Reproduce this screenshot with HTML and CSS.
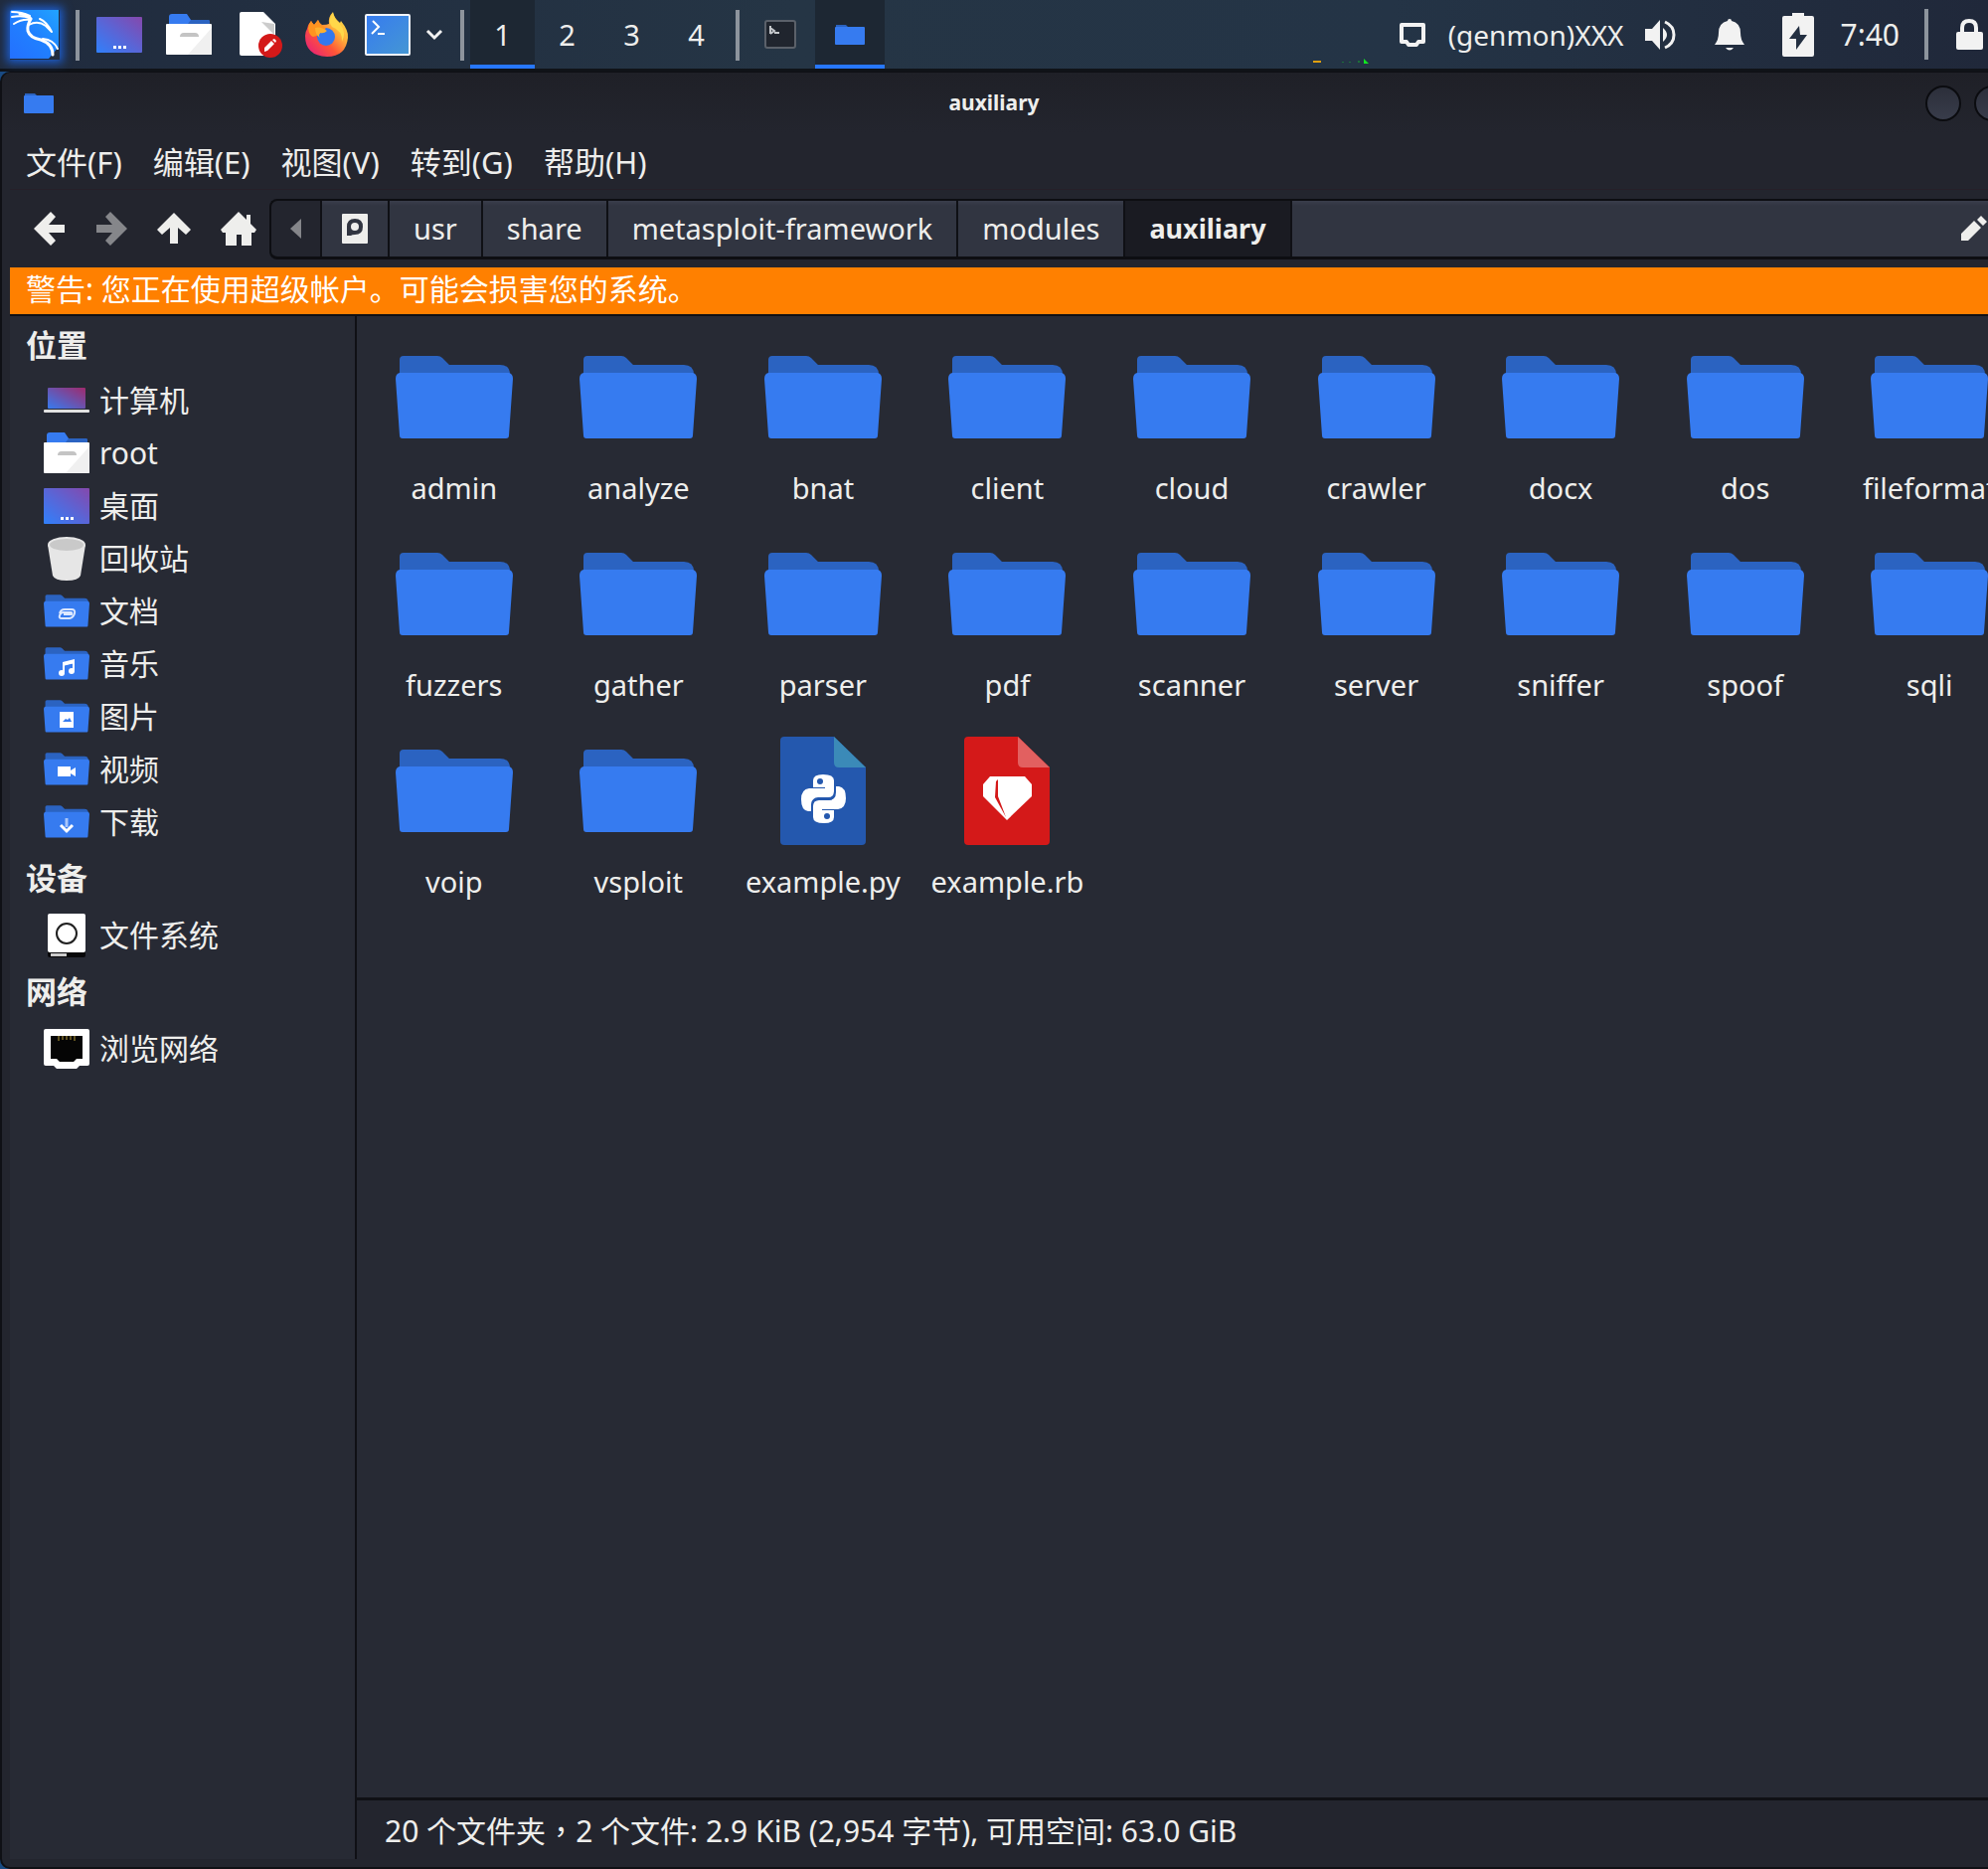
FILE: index.html
```
<!DOCTYPE html>
<html lang="zh-CN">
<head>
<meta charset="utf-8">
<title>auxiliary</title>
<link rel="stylesheet" href="styles.css">
</head>
<body>
<svg class="defs" aria-hidden="true">
  <defs>
    <linearGradient id="g-kali" x1="0" y1="1" x2="1" y2="0"><stop offset="0" stop-color="#2470ff"/><stop offset=".5" stop-color="#2080ff"/><stop offset="1" stop-color="#22a4ff"/></linearGradient>
    <linearGradient id="g-desk" x1="0" y1="1" x2="1" y2="0"><stop offset="0" stop-color="#3080fb"/><stop offset=".5" stop-color="#5a65d6"/><stop offset="1" stop-color="#8548ac"/></linearGradient>
    <linearGradient id="g-laptop" x1="0" y1="1" x2="1" y2="0"><stop offset="0" stop-color="#367bf0"/><stop offset="1" stop-color="#a02a6c"/></linearGradient>
    <linearGradient id="g-term" x1="0" y1="0" x2="1" y2="1"><stop offset="0" stop-color="#367bf0"/><stop offset="1" stop-color="#4597d3"/></linearGradient>
    <linearGradient id="g-fox" x1="1" y1="0" x2="0" y2="1"><stop offset="0" stop-color="#fff44f"/><stop offset=".35" stop-color="#ffb03a"/><stop offset=".6" stop-color="#ff5537"/><stop offset="1" stop-color="#e31587"/></linearGradient>
  </defs>
  <symbol id="folder" viewBox="0 0 118 84"><path fill="#2b63c1" d="M4 26V4q0-4 4-4h34q3 0 5 2l7 7h51q10 0 10 10v8z"/><path fill="#367bf0" d="M4 17h110q4 1 4 6l-4 57q0 3-3 3H7q-3 0-3-3L0 23q0-5 4-6z"/></symbol>
  <symbol id="home-folder" viewBox="0 0 46 42"><path fill="#367bf0" d="M3 12V3q0-3 3-3h15l4 6h17q2 0 2 2v5H3z"/><path fill="#2b63c1" d="M22 10l3-4h17q2 0 2 2v3H22z"/><path fill="#fff" d="M1 10h44q1 0 1 1v29q0 1-1 1H1q-1 0-1-1V11q0-1 1-1z"/><path fill="#f0f0f0" d="M46 14v26q0 1-1 1H22z"/><path fill="#c4c4c4" d="M14 23q0-4 4-4h11q4 0 4 4z"/></symbol>
  <symbol id="desktop" viewBox="0 0 46 36"><rect width="46" height="36" rx="1" fill="url(#g-desk)"/><path fill="#fff" d="M17 29h3v3h-3zm5 0h3v3h-3zm5 0h3v3h-3z"/></symbol>
</svg>

<header class="panel">
  <button class="launch kali" aria-label="Kali"><svg width="50" height="50" viewBox="0 0 50 50"><path fill="url(#g-kali)" d="M1 0h48v37L39 49H0V1z"/><g fill="none" stroke="#fff" stroke-linecap="round"><path stroke-width="2" d="M2 2q10 0 18 4M2 7q10-2 18 1M4 14q8-5 16-4"/><path stroke-width="3" d="M10 4q8 1 11 5-4 7-3 12 2 7 13 9 12 4 12 15"/><path stroke-width="2" d="M33 29q11 1 15 10"/><path stroke-width="2" d="M19 15q9-5 17 1l6 6M30 9q7 3 12 13"/></g></svg></button>
  <span class="sep"></span>
  <nav class="launchers">
    <button class="launch show-desktop" aria-label="桌面"><svg width="46" height="36"><use href="#desktop"/></svg></button>
    <button class="launch files-app" aria-label="主目录"><svg width="46" height="42"><use href="#home-folder"/></svg></button>
    <button class="launch editor" aria-label="编辑器"><svg width="44" height="46" viewBox="0 0 44 46"><path fill="#fff" d="M2 0h22l12 12v32H2q-2 0-2-2V2q0-2 2-2z"/><path fill="#ccc" d="M22 10l13 2v11z"/><circle cx="31" cy="34" r="12" fill="#d41919"/><path fill="#fff" d="M25 40v-4l7-7 3 3-7 7zM33 28l2-1 2 2-1 2z"/></svg></button>
    <button class="launch browser" aria-label="Firefox"><svg width="44" height="46" viewBox="0 0 44 46"><path fill="url(#g-fox)" d="M2 17Q3 12 6 9q1 2 3 4l4-5q1 3 4 5 5 0 7-1-1-7 4-12 1 6 7 11l1-2q8 10 7 17-2 19-21 19Q0 44 0 24q0-4 2-7z"/><circle cx="21" cy="25" r="9" fill="#3378ef"/><path fill="#ff9420" d="M6 9q1 2 3 4l4-5q1 4 5 6l3 3-5 3q-2 4-8 5-4-1-5-9 1-5 3-7z"/><path fill="#ffb02e" d="M10 16q5-2 12 3-3 3-7 2-2 3 0 5-5-3-5-10z"/><path fill="#ffd84a" d="M28 1q1 6 7 11 7 8 2 18 1-11-10-15-5-6 1-14z"/></svg></button>
    <button class="launch terminal" aria-label="终端"><svg width="46" height="42" viewBox="0 0 46 42"><rect x="1" y="1" width="44" height="40" rx="1" fill="url(#g-term)" stroke="#f2f5fa" stroke-width="2"/><path fill="none" stroke="#fff" stroke-width="2" d="M8 7l6 6-7 7M13 20h7"/></svg></button>
    <button class="launch chevron" aria-label="更多"><svg width="18" height="12" viewBox="0 0 18 12"><path fill="none" stroke="#f2f2f2" stroke-width="3" d="M2 2l7 7 7-7"/></svg></button>
  </nav>
  <span class="sep"></span>
  <nav class="workspaces">
    <button class="ws current">1</button><button class="ws">2</button><button class="ws">3</button><button class="ws">4</button>
  </nav>
  <span class="sep"></span>
  <nav class="tasks">
    <button class="task" aria-label="终端窗口"><svg width="32" height="30" viewBox="0 0 32 30"><rect x="1" y="1" width="30" height="27" rx="2" fill="#20252e" stroke="#5b616a" stroke-width="2"/><path fill="none" stroke="#c5c8cc" stroke-width="2" d="M6 6v8M6 8l4 3-4 3M10 13h5"/></svg></button>
    <button class="task current" aria-label="auxiliary"><svg width="30" height="22" viewBox="0 0 30 22"><path fill="#2b63c1" d="M1 8V1h10l2 2h15v5z"/><rect y="3" width="30" height="18" rx="1" fill="#367bf0"/></svg></button>
  </nav>
  <div class="tray">
    <svg class="graph" width="56" height="6" viewBox="0 0 56 6"><path fill="#e0a010" d="M0 2h8v2H0z"/><path fill="#1c7038" d="M29 3h2v1h-2zm7 0h2v1h-2zm9-1h2v2h-2z"/><path fill="#10e820" d="M51 0l5 5h-5z"/></svg>
    <svg class="chip" width="28" height="24" viewBox="0 0 28 24"><path fill="none" stroke="#f2f2f2" stroke-width="4" stroke-linejoin="round" d="M3 2h22v17h-5l-2 3h-8l-2-3H3z"/></svg>
    <span class="genmon">(genmon)XXX</span>
    <svg class="speaker" width="32" height="30" viewBox="0 0 32 30"><path fill="#f2f2f2" d="M0 9h7l8-9v30l-8-9H0zM18 8q8 7 0 14z"/><path fill="none" stroke="#f2f2f2" stroke-width="3" d="M20 2q9 4 9 13t-9 13"/></svg>
    <svg class="bell" width="30" height="32" viewBox="0 0 30 32"><path fill="#f2f2f2" d="M13 2q0-2 2-2t2 2q9 2 9 12 0 7 4 12H0q4-5 4-12Q4 4 13 2zM11 29h8q-4 5-8 0z"/></svg>
    <svg class="battery" width="32" height="44" viewBox="0 0 32 44"><path fill="#f2f2f2" d="M10 0h12v3h8q2 0 2 2v37q0 2-2 2H2q-2 0-2-2V5q0-2 2-2h8z"/><path fill="#232f41" d="M17 13L7 26h7v11l11-15h-7z"/></svg>
    <time class="clock">7:40</time>
    <span class="sep"></span>
    <svg class="lock" width="27" height="31" viewBox="0 0 27 31"><path fill="none" stroke="#f2f2f2" stroke-width="4" d="M6 14V9q0-7 7-7t7 7v5"/><rect y="13" width="27" height="18" rx="2" fill="#f2f2f2"/></svg>
  </div>
</header>

<main class="window">
  <div class="titlebar">
    <svg class="title-icon" width="30" height="22" viewBox="0 0 30 22"><path fill="#2b63c1" d="M1 8V1h10l2 2h15v5z"/><rect y="3" width="30" height="18" rx="1" fill="#367bf0"/></svg>
    <h1>auxiliary</h1>
    <div class="controls"><button class="ctl" aria-label="最小化"></button><button class="ctl" aria-label="最大化"></button></div>
  </div>
  <nav class="menubar"><button>文件(F)</button><button>编辑(E)</button><button>视图(V)</button><button>转到(G)</button><button>帮助(H)</button></nav>
  <div class="toolbar">
    <div class="nav-buttons">
      <button aria-label="后退"><svg width="32" height="34" viewBox="0 0 32 34"><path fill="#eeeeec" d="M17 0l5 5-7 8h16v8H15l7 8-5 5L0 17z"/></svg></button>
      <button aria-label="前进" disabled><svg width="32" height="34" viewBox="0 0 32 34"><path fill="#85868a" d="M15 0l-5 5 7 8H1v8h16l-7 8 5 5 17-17z"/></svg></button>
      <button aria-label="向上"><svg width="34" height="32" viewBox="0 0 34 32"><path fill="#eeeeec" d="M17 0l17 17-5 5-8-7v16h-8V15l-8 7-5-5z"/></svg></button>
      <button aria-label="主目录"><svg width="36" height="34" viewBox="0 0 36 34"><path fill="#eeeeec" d="M18 0l8 8V3h4v9l6 6-2 3h-3v13H21V23h-5v11H5V21H2l-2-3z"/></svg></button>
    </div>
    <div class="pathbar">
      <button class="crumb scroll" aria-label="向左"><svg width="11" height="20" viewBox="0 0 11 20"><path fill="#85868a" d="M11 0v20L0 10z"/></svg></button>
      <button class="crumb disk" aria-label="文件系统"><svg width="26" height="30" viewBox="0 0 26 30"><rect width="26" height="30" rx="1" fill="#eeeeec"/><path fill="#313541" d="M5 22V13q0-8 8-8t8 8-8 8q-3 0-4 1z"/><circle cx="13" cy="13" r="4" fill="#eeeeec"/></svg></button>
      <button class="crumb">usr</button><button class="crumb">share</button><button class="crumb">metasploit-framework</button><button class="crumb">modules</button><button class="crumb active">auxiliary</button>
      <button class="crumb edit" aria-label="编辑路径"><svg width="26" height="26" viewBox="0 0 26 26"><path fill="#eeeeec" d="M0 18L13 5l7 7L7 25H0zM16 4l4-4 6 6-4 4z"/></svg></button>
    </div>
  </div>
  <p class="warning">警告: 您正在使用超级帐户。可能会损害您的系统。</p>
  <div class="panes">
    <aside class="sidebar">
      <h2>位置</h2>
      <a href="#"><svg width="46" height="26" viewBox="0 0 46 26"><rect x="4" y="0" width="38" height="21" rx="1" fill="url(#g-laptop)"/><rect y="22" width="46" height="3" rx="1" fill="#e2e2e2"/></svg>计算机</a>
      <a href="#"><svg width="46" height="42"><use href="#home-folder"/></svg>root</a>
      <a href="#"><svg width="46" height="36"><use href="#desktop"/></svg>桌面</a>
      <a href="#"><svg width="46" height="46" viewBox="0 0 46 46"><path fill="#e6e6e6" d="M4 9l5 31q2 5 14 5t14-5l5-31z"/><ellipse cx="23" cy="9" rx="19" ry="8" fill="#e6e6e6"/><ellipse cx="23" cy="9" rx="17" ry="6" fill="#c9c9c9"/></svg>回收站</a>
      <a href="#"><svg width="46" height="34" viewBox="0 0 46 34"><use href="#folder" width="46" height="33"/><path fill="none" stroke="#dce8ff" stroke-width="2" d="M16 19q1-4 5-4h7q4 0 3 4t-5 5h-8q-3 0-2-3t4-3h7q2 0 1 2h-8"/></svg>文档</a>
      <a href="#"><svg width="46" height="34" viewBox="0 0 46 34"><use href="#folder" width="46" height="33"/><path fill="none" stroke="#fff" stroke-width="2" d="M20 25v-8l10-2v9"/><path fill="#fff" d="M19 15l12-3v4l-12 3z"/><circle cx="18" cy="26" r="3" fill="#fff"/><circle cx="28" cy="24" r="3" fill="#fff"/></svg>音乐</a>
      <a href="#"><svg width="46" height="34" viewBox="0 0 46 34"><use href="#folder" width="46" height="33"/><rect x="16" y="12" width="14" height="16" fill="#fff"/><path fill="#367bf0" d="M19 22l3-3 2 1 2-2 2 4z"/></svg>图片</a>
      <a href="#"><svg width="46" height="34" viewBox="0 0 46 34"><use href="#folder" width="46" height="33"/><path fill="#fff" d="M14 14h13v4l5-3v9l-5-3v3H14z"/></svg>视频</a>
      <a href="#"><svg width="46" height="34" viewBox="0 0 46 34"><use href="#folder" width="46" height="33"/><path fill="none" stroke="#a9c6fb" stroke-width="3" d="M23 13v9"/><path fill="none" stroke="#fff" stroke-width="3" d="M17 20l6 6 6-6"/></svg>下载</a>
      <h2>设备</h2>
      <a href="#"><svg width="46" height="46" viewBox="0 0 46 46"><rect x="4" y="30" width="38" height="15" rx="2" fill="#08080a"/><rect x="4" y="1" width="38" height="39" rx="2" fill="#fff"/><path fill="#ccc" d="M7 41h16v3H7z"/><circle cx="23" cy="21" r="10" fill="none" stroke="#202020" stroke-width="2"/></svg>文件系统</a>
      <h2>网络</h2>
      <a href="#"><svg width="46" height="40" viewBox="0 0 46 40"><path fill="#fff" d="M2 0h42q2 0 2 2v33q0 2-2 2h-8l-3 3H13l-3-3H2q-2 0-2-2V2q0-2 2-2z"/><path fill="#050505" d="M7 7h32v23h-6l-3 3H16l-3-3H7z"/><path stroke="#b59a38" stroke-width="1" d="M15 7v5M19 7v4M23 7v4M27 7v4M31 7v5"/></svg>浏览网络</a>
    </aside>
    <section class="content">
      <ul class="files">
        <li><a href="#"><svg><use href="#folder"/></svg>admin</a></li>
        <li><a href="#"><svg><use href="#folder"/></svg>analyze</a></li>
        <li><a href="#"><svg><use href="#folder"/></svg>bnat</a></li>
        <li><a href="#"><svg><use href="#folder"/></svg>client</a></li>
        <li><a href="#"><svg><use href="#folder"/></svg>cloud</a></li>
        <li><a href="#"><svg><use href="#folder"/></svg>crawler</a></li>
        <li><a href="#"><svg><use href="#folder"/></svg>docx</a></li>
        <li><a href="#"><svg><use href="#folder"/></svg>dos</a></li>
        <li><a href="#"><svg><use href="#folder"/></svg>fileformat</a></li>
        <li><a href="#"><svg><use href="#folder"/></svg>fuzzers</a></li>
        <li><a href="#"><svg><use href="#folder"/></svg>gather</a></li>
        <li><a href="#"><svg><use href="#folder"/></svg>parser</a></li>
        <li><a href="#"><svg><use href="#folder"/></svg>pdf</a></li>
        <li><a href="#"><svg><use href="#folder"/></svg>scanner</a></li>
        <li><a href="#"><svg><use href="#folder"/></svg>server</a></li>
        <li><a href="#"><svg><use href="#folder"/></svg>sniffer</a></li>
        <li><a href="#"><svg><use href="#folder"/></svg>spoof</a></li>
        <li><a href="#"><svg><use href="#folder"/></svg>sqli</a></li>
        <li><a href="#"><svg><use href="#folder"/></svg>voip</a></li>
        <li><a href="#"><svg><use href="#folder"/></svg>vsploit</a></li>
        <li><a href="#"><svg class="doc" viewBox="0 0 86 110"><path fill="#2458ae" d="M4 0h50l32 31v74q0 4-4 4H4q-4 0-4-4V4q0-4 4-4z"/><path fill="#3b8ab8" d="M54 0l32 31H59q-5 0-5-5z"/><g transform="translate(21 38)" fill="#fff"><path id="py-half" d="M12 13V6q0-6 10-6 11 0 11 6v11q0 6-6 6H17q-6 0-6 7v7H7q-7-1-7-12 0-10 8-11h16v-1z"/><use href="#py-half" transform="rotate(180 22.500 24.500)"/><circle cx="19" cy="7" r="3" fill="#2458ae"/><circle cx="26" cy="42" r="3" fill="#2458ae"/><path d="M11 37v-7q0-5 6-5h10q7 0 7-7v-6" fill="none" stroke="#2458ae" stroke-width="2"/></g></svg>example.py</a></li>
        <li><a href="#"><svg class="doc" viewBox="0 0 86 110"><path fill="#d41919" d="M4 0h50l32 31v74q0 4-4 4H4q-4 0-4-4V4q0-4 4-4z"/><path fill="#e26060" d="M54 0l32 31H59q-5 0-5-5z"/><path fill="#fff" d="M26 40h35l7 8v12L43 84 19 60V48z"/><path fill="#d41919" d="M32 45l2-2v17l8 21-11-20z"/></svg>example.rb</a></li>
      </ul>
      <footer class="status">20 个文件夹<span class="comma" lang="zh-TW">，</span>2 个文件: 2.9 KiB (2,954 字节), 可用空间: 63.0 GiB</footer>
    </section>
  </div>
</main>
</body>
</html>
```
FILE: styles.css
```
* { box-sizing: border-box; }

body {
  margin: 0;
  min-height: 100vh;
  display: flex;
  flex-direction: column;
  background: #194a82;
  color: #eeeeec;
  font: 30px/36px "Noto Sans", "Noto Sans CJK SC", sans-serif;
  overflow: hidden;
}

button {
  margin: 0;
  padding: 0;
  border: 0;
  background: none;
  color: inherit;
  font: inherit;
  display: flex;
  align-items: center;
  justify-content: center;
}

a { color: inherit; text-decoration: none; }
svg { display: block; flex: none; }
.defs { position: absolute; width: 0; height: 0; }

/* Top panel */
.panel {
  height: 72px;
  flex: none;
  display: flex;
  align-items: stretch;
  padding-left: 10px;
  border-bottom: 3px solid #101318;
  background: linear-gradient(90deg, #202b3e, #253545 40%, #243446 70%, #20283a);
  font-size: 29px;
}
.sep { width: 4px; height: 51px; margin-top: 10px; flex: none; background: #8d949d; }
.kali { margin-right: 16px; }
.kali svg { box-shadow: 0 0 9px 3px #1d5fd2; }
.launchers { display: flex; margin: 0 12px 0 5px; flex: none; }
.show-desktop, .files-app { width: 70px; }
.editor { width: 76px; }
.browser { width: 56px; }
.terminal { width: 66px; }
.chevron { width: 28px; }
.workspaces { display: flex; margin-left: 6px; margin-right: 7px; }
.ws { width: 65px; }
.current { background: #1d2733; border-bottom: 4px solid #2777ff; padding-top: 4px; }
.tasks { display: flex; margin-left: 6px; }
.task { width: 70px; }
.tray { display: flex; align-items: center; margin-left: auto; padding-right: 5px; }
.tray .sep { margin: 0 28px 0 25px; }
.graph { align-self: flex-end; margin: 0 30px 4px 0; }
.chip { margin-right: 22px; }
.genmon { font-size: 28px; }
.speaker { margin: 0 38px 0 22px; }
.bell { margin-right: 38px; }
.battery { margin-right: 26px; }
.clock { font-size: 30px; }

/* File manager window */
.window {
  flex: 1;
  display: flex;
  flex-direction: column;
  border: solid #0f1015;
  border-width: 1px 0 2px 2px;
  border-radius: 10px 0 0 10px;
  padding: 0 0 8px 8px;
  background: linear-gradient(#1f2027, #23252e 60px);
  overflow: hidden;
}
.titlebar {
  display: grid;
  grid-template-columns: 1fr auto 1fr;
  align-items: center;
  height: 62px;
  padding-left: 14px;
}
.titlebar h1 { margin: 0 24px 2px 0; font-size: 21px; line-height: 30px; }
.controls { display: flex; gap: 13px; justify-content: flex-end; margin-right: -22px; }
.ctl { width: 36px; height: 36px; border: 2px solid #0b0c10; border-radius: 50%; background: linear-gradient(#2c2f3a, #383c4a); }
.menubar { display: flex; gap: 31px; height: 56px; padding-left: 16px; border-bottom: 1px solid #262029; font-size: 31px; }
.toolbar { display: flex; align-items: center; height: 78px; }
.nav-buttons { display: flex; gap: 30px; width: 261px; padding-left: 24px; flex: none; }
.pathbar {
  display: flex;
  flex: 1;
  height: 61px;
  border: solid #0d0e12;
  border-width: 2px 0 3px 2px;
  border-radius: 8px 0 0 8px;
  font-size: 29px;
}
.crumb { padding: 0 24px; border-right: 2px solid #0f1015; background: linear-gradient(#3a3d4b, #313541 5px); }
.crumb.scroll { width: 51px; padding: 0; background: none; }
.crumb.disk { width: 68px; padding: 0; }
.crumb.active { background: #1a1b22; font-size: 27px; font-weight: 700; }
.crumb.edit { flex: 1; justify-content: flex-end; padding: 0 1px; border: 0; }
.warning {
  margin: 0;
  height: 49px;
  padding: 4px 16px;
  border-bottom: 2px solid #0f1015;
  background: #ff8000;
  color: #fff;
}

.panes { display: flex; flex: 1; min-height: 0; }
.sidebar { width: 349px; flex: none; border-right: 2px solid #0f1015; background: #272a34; }
.sidebar h2 { margin: 0; padding: 0 16px; font-size: 31px; line-height: 61px; }
.sidebar h2:first-child { line-height: 58px; }
.sidebar a { display: flex; align-items: center; gap: 10px; height: 53px; padding-left: 34px; }

.content { display: flex; flex: 1; flex-direction: column; min-width: 0; }
.files {
  flex: 1;
  display: grid;
  grid-template-columns: repeat(9, 1fr);
  grid-auto-rows: 198px;
  width: calc(100% + 34px);
  margin: 0;
  padding: 18px 0 0 5px;
  list-style: none;
  background: #272a34;
  font-size: 29px;
}
.files a { display: flex; flex-direction: column; align-items: center; line-height: 38px; }
.files svg { width: 118px; height: 84px; margin: 22px 0 30px; }
.files svg.doc { width: 86px; height: 110px; margin: 9px 0 17px; }
.status {
  height: 62px;
  padding: 11px 28px;
  border-top: 3px solid #0f1015;
}
.comma { font-family: "Noto Sans CJK TC", sans-serif; }
```
